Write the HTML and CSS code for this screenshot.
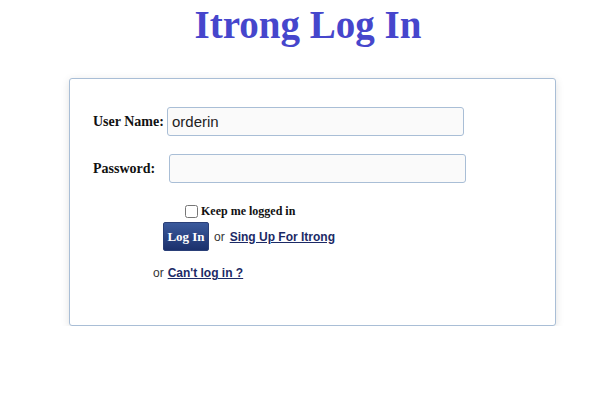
FILE: index.html
```html
<!DOCTYPE html>
<html lang="en">

<head>
  <meta charset="UTF-8">
  <meta name="viewport" content="width=device-width, initial-scale=1.0">
  <title>Itrong Log In</title>

  <!-- styles -->
  <link rel="stylesheet" href="styles.css">
</head>

<body>
  <h1 class="title">Itrong Log In</h1>

  <div class="login-box">
    <form class="login-form">
      <div class="row">
        <label for="user">User Name:</label>
        <input type="text" id="user" value="orderin">
      </div>
      <div class="row">
        <label for="pass" class="pass-label">Password:</label>
        <input type="password" id="pass">
      </div>

      <div class="keep">
        <input type="checkbox" id="keep">
        <label for="keep">Keep me logged in</label>
      </div>

      <div class="actions">
        <button type="button" class="btn">Log In</button>
        <span class="or">or</span>
        <a href="#">Sing Up For Itrong</a>
      </div>

      <div class="forgot">
        <span class="or">or</span>
        <a href="#">Can't log in ?</a>
      </div>
    </form>
  </div>
</body>

</html>
```

FILE: styles.css
```css
* {
  margin: 0;
  padding: 0;
  box-sizing: border-box;
}

body {
  background-color: #fff;
  font-family: "Liberation Serif", "Times New Roman", serif;
  color: #111;
}

.title {
  margin-top: 2px;
  font-size: 39px;
  line-height: 45px;
  text-align: center;
  padding-left: 16px;
  color: #4646cc;
}

.login-box {
  width: 487px;
  height: 248px;
  margin: 31px 0 0 69px;
  border: 1px solid #a9bed6;
  border-radius: 3px;
  box-shadow: 0 2px 8px rgba(0, 0, 0, 0.12);
  background-color: #fff;
}

.login-form {
  padding: 28px 0 0 23px;
}

.row {
  display: flex;
  align-items: center;
  margin-bottom: 18px;
}

.row label {
  width: 74px;
  font-size: 14px;
  font-weight: bold;
}

.row .pass-label {
  width: 76px;
}

.row input {
  width: 297px;
  height: 29px;
  padding: 0 4px;
  border: 1px solid #a9bed6;
  border-radius: 3px;
  background-color: #fafafa;
  font-family: "Liberation Sans", Arial, sans-serif;
  font-size: 15px;
  color: #222;
}

.keep {
  display: flex;
  align-items: center;
  gap: 3px;
  margin: 21px 0 0 92px;
  font-size: 12px;
  font-weight: bold;
}

.keep input {
  width: 13px;
  height: 13px;
  margin: 0;
  accent-color: #555;
}

.actions {
  display: flex;
  align-items: center;
  gap: 5px;
  margin: 3px 0 0 70px;
}

.btn {
  width: 46px;
  height: 29px;
  border: 1px solid #2a3f78;
  border-radius: 2px;
  background: linear-gradient(#3b5a9c, #1b306c);
  color: #fff;
  font-family: "Liberation Serif", "Times New Roman", serif;
  font-size: 13px;
  font-weight: bold;
  cursor: pointer;
}

.or {
  font-family: "Liberation Sans", Arial, sans-serif;
  font-size: 12px;
  color: #333;
}

.actions a,
.forgot a {
  font-family: "Liberation Sans", Arial, sans-serif;
  font-size: 12px;
  font-weight: bold;
  color: #1c2a66;
}

.forgot {
  display: flex;
  gap: 4px;
  margin: 15px 0 0 60px;
}
```
